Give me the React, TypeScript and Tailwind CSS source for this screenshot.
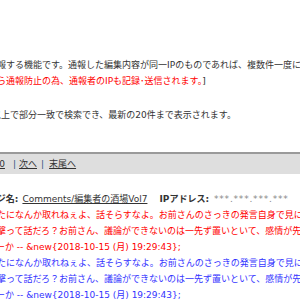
export default function App() {
  const line = "whitespace-nowrap";
  return (
    <div className="h-[300px] w-[300px] overflow-hidden bg-white font-['DejaVu_Sans','Noto_Sans_CJK_JP',sans-serif] text-[9px] leading-[16px] text-[#333]">
      <div className="pt-[57px]">
        <p className={`${line} -ml-[12px]`}>
          通報する機能です。通報した編集内容が同一IPのものであれば、複数件一度に通報できます。
        </p>
        <p className={`${line} -ml-[12px]`}>
          <span className="text-[#ff0000]">から通報防止の為、通報者のIPも記録･送信されます。</span>]
        </p>
      </div>

      <p className={`${line} mt-[18px] -ml-[8px]`}>
        以上で部分一致で検索でき、最新の20件まで表示されます。
      </p>

      <div className="mt-[29px] flex h-[22px] items-center whitespace-nowrap border-t-2 border-[#9a9a9a] bg-[#dedede]">
        <a className="-ml-[6.5px] underline">20</a>
        <span className="ml-[8px] text-[#2f5080]">|</span>
        <a className="ml-[3px] underline">次へ</a>
        <span className="ml-[4px] text-[#2f5080]">|</span>
        <a className="ml-[5px] underline">末尾へ</a>
      </div>

      <div className="mt-[17px] flex whitespace-nowrap">
        <span className="-ml-[21px] font-bold">ページ名:</span>
        <a className="ml-[4px] underline">Comments/編集者の酒場Vol7</a>
        <span className="ml-[12px] font-bold">IPアドレス:</span>
        <span className="ml-[5px] tracking-[0.8px] text-[#888]">***.***.***.***</span>
      </div>

      <div className="text-[#ff0000]">
        <p className={`${line} -ml-[21px]`}>
          あんたになんか取れねぇよ、話そらすなよ。お前さんのさっきの発言自身で見にくいと思うがね
        </p>
        <p className={`${line} -ml-[12px]`}>
          攻撃って話だろ？お前さん、議論ができないのは一先ず置いといて、感情が先に出てる
        </p>
        <p className={`${line} -ml-[31px]`}>じゃねーか -- &amp;new{"{"}2018-10-15 (月) 19:29:43{"}"};</p>
      </div>

      <div className="text-[#3333ff]">
        <p className={`${line} -ml-[21px]`}>
          あんたになんか取れねぇよ、話そらすなよ。お前さんのさっきの発言自身で見にくいと思うがね
        </p>
        <p className={`${line} -ml-[12px]`}>
          攻撃って話だろ？お前さん、議論ができないのは一先ず置いといて、感情が先に出てる
        </p>
        <p className={`${line} -ml-[31px]`}>じゃねーか -- &amp;new{"{"}2018-10-15 (月) 19:29:43{"}"};</p>
      </div>
    </div>
  );
}
